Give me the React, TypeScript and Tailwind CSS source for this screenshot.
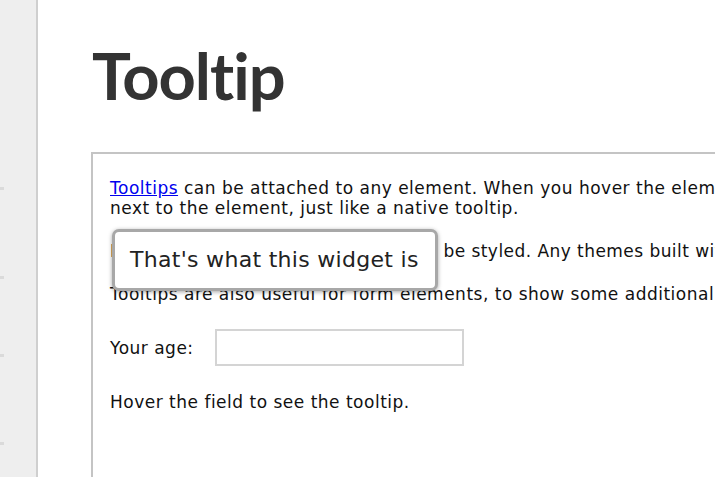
import React from "react";

export default function App() {
  const body = { fontFamily: '"DejaVu Sans", Verdana, sans-serif' };
  return (
    <div className="flex h-[477px] w-[715px] overflow-hidden bg-white" style={body}>
      <div className="flex w-[38px] shrink-0 flex-col border-r-2 border-[#cfcfcf] bg-[#eeeeee] pt-[187px]">
        <span className="h-[3px] w-[4px] bg-[#dadada]" />
        <span className="mt-[86px] h-[3px] w-[4px] bg-[#dadada]" />
        <span className="mt-[75px] h-[3px] w-[4px] bg-[#dadada]" />
        <span className="mt-[85px] h-[3px] w-[4px] bg-[#dadada]" />
      </div>
      <div className="flex-1 min-w-0 pl-[53px]">
        <h1
          className="mt-[35px] ml-[1px] text-[65px] font-bold leading-[80px] tracking-[-1px] text-[#333333]"
          style={{ fontFamily: 'Lato, "Open Sans", sans-serif' }}
        >
          Tooltip
        </h1>
        <div className="relative mt-[37px] w-[700px] h-[400px] border-2 border-[#c4c4c4] pl-[17px] pt-[24px] text-[17px] leading-[20px] tracking-[0.5px] text-[#111111] whitespace-nowrap">
          <p>
            <a href="#" className="text-[#0000ee] underline">Tooltips</a> can be attached to any element. When you hover the element with your mouse, the title attribute is displayed in a little box
            <br />
            next to the element, just like a native tooltip.
          </p>
          <p className="mt-[23px] tracking-[0.45px]">
            But as it's not a native tooltip, it can be styled. Any themes built with ThemeRoller will also style tooltips accordingly.
          </p>
          <p className="mt-[23px]">
            Tooltips are also useful for form elements, to show some additional information in the context of each field.
          </p>
          <div className="mt-[25px] flex items-center">
            <label className="w-[105px]">Your age:</label>
            <div className="h-[37px] w-[249px] border-2 border-[#d4d4d4] bg-white" />
          </div>
          <p className="mt-[26px]">Hover the field to see the tooltip.</p>

          <div className="absolute left-[19px] top-[75px] flex h-[62px] w-[326px] items-center rounded-[7px] border-[3px] border-[#a8a8a8] bg-white pl-[15px] text-[22px] tracking-[0.3px] text-[#222222] shadow-[0_1px_4px_rgba(0,0,0,0.35)]">
            That's what this widget is
          </div>
        </div>
      </div>
    </div>
  );
}
